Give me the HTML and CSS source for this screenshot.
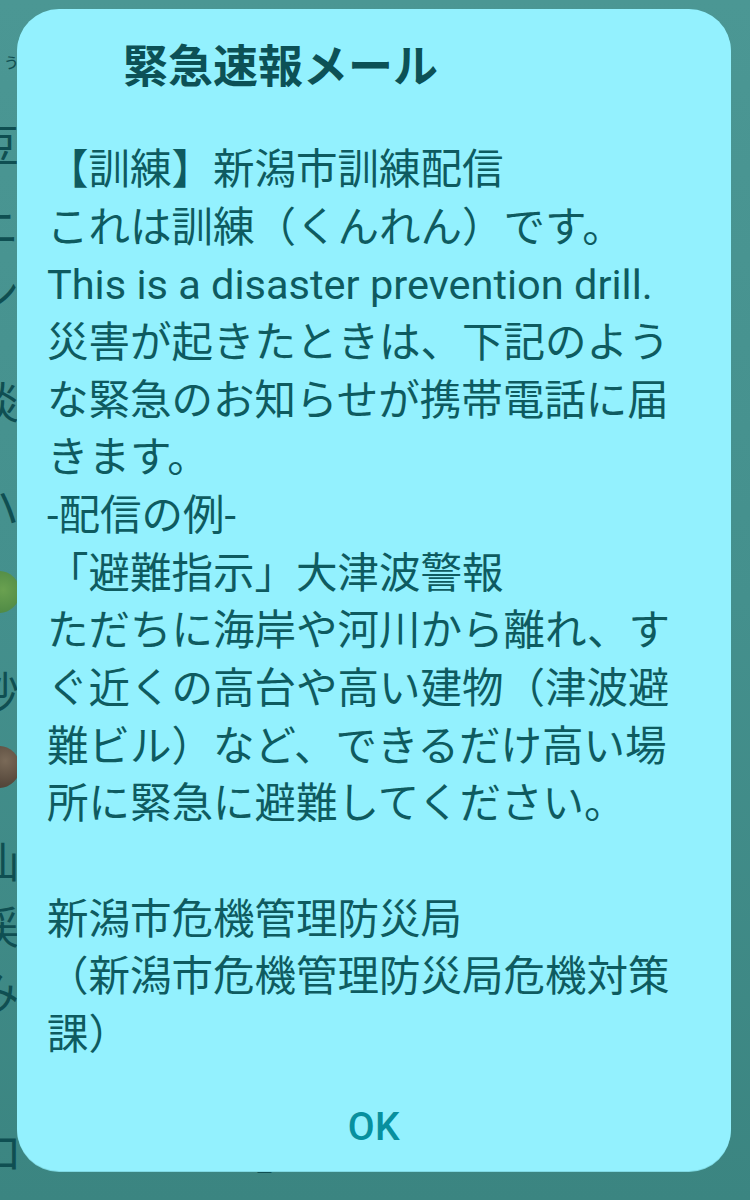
FILE: index.html
```html
<!DOCTYPE html>
<html lang="ja">
<head>
<meta charset="utf-8">
<title>緊急速報メール</title>
<link rel="stylesheet" href="styles.css">
</head>
<body>
<div class="screen">
  <div class="behind">
    <div class="brow small">ぅ</div>
    <div class="brow">豆</div>
    <div class="brow">ニ</div>
    <div class="brow">ン</div>
    <div class="brow">淡</div>
    <div class="brow">ハ</div>
    <div class="brow"><span class="emoji green"></span></div>
    <div class="brow">炒</div>
    <div class="brow"><span class="emoji brown"></span></div>
    <div class="brow">仙</div>
    <div class="brow">渓</div>
    <div class="brow">み</div>
    <div class="brow last">ローごさく、」</div>
  </div>

  <div class="dialog" role="dialog">
    <h1 class="title">緊急速報メール</h1>
    <div class="message">【訓練】新潟市訓練配信
これは訓練（くんれん）です。
This is a disaster prevention drill.
災害が起きたときは、下記のような緊急のお知らせが携帯電話に届きます。
-配信の例-
「避難指示」大津波警報
ただちに海岸や河川から離れ、すぐ近くの高台や高い建物（津波避難ビル）など、できるだけ高い場所に緊急に避難してください。

新潟市危機管理防災局
（新潟市危機管理防災局危機対策課）</div>
    <div class="actions">
      <button class="ok">OK</button>
    </div>
  </div>
</div>
</body>
</html>
```

FILE: styles.css
```css
html, body {
  margin: 0;
  padding: 0;
}

body {
  width: 750px;
  height: 1200px;
  overflow: hidden;
  font-family: Roboto, "Noto Sans CJK JP", sans-serif;
}

.screen {
  position: relative;
  width: 750px;
  height: 1200px;
  overflow: hidden;
  background: linear-gradient(to bottom, #4b9794 0%, #44908d 50%, #3b8581 100%);
}

/* underlying page, dimmed by the scrim */
.behind {
  display: flex;
  flex-direction: column;
  color: #0f4f52;
  font-family: "Noto Sans CJK JP", sans-serif;
  font-size: 44px;
}

.brow {
  height: 44px;
  line-height: 44px;
  margin-left: -25px;
  white-space: nowrap;
}

.brow.small {
  font-size: 18px;
  margin-left: 2px;
  margin-top: 38px;
}

.brow:nth-child(2) { margin-top: 39px; }
.brow:nth-child(3) { margin-top: 38px; }
.brow:nth-child(4) { margin-top: 21px; }
.brow:nth-child(5) { margin-top: 66px; }
.brow:nth-child(6) { margin-top: 61px; }
.brow:nth-child(7) { margin-top: 36px; }
.brow:nth-child(8) { margin-top: 61px; }
.brow:nth-child(9) { margin-top: 26px; }
.brow:nth-child(10) { margin-top: 56px; }
.brow:nth-child(11) { margin-top: 21px; }
.brow:nth-child(12) { margin-top: 21px; }

.brow.last {
  margin-top: 116px;
  margin-left: -22px;
  letter-spacing: 6px;
}

.emoji {
  display: inline-block;
  width: 42px;
  height: 42px;
  border-radius: 50%;
  vertical-align: middle;
  margin-left: 3px;
}

.emoji.green {
  background: radial-gradient(circle at 60% 45%, #6aa150 0%, #4f8a45 70%, #3f7a40 100%);
}

.emoji.brown {
  background: radial-gradient(circle at 65% 35%, #7a6a58 0%, #57493c 60%, #463b31 100%);
}

/* dialog */
.dialog {
  position: absolute;
  left: 17px;
  top: 9px;
  width: 714px;
  height: 1162px;
  box-sizing: border-box;
  background: #93f1fe;
  border-radius: 42px;
  display: flex;
  flex-direction: column;
  box-shadow: 0 1px 0 #7fd9e3;
}

.title {
  margin: 0;
  padding: 29px 0 0 106px;
  height: 60px;
  line-height: 60px;
  font-size: 45px;
  font-weight: 700;
  color: #0c5156;
  font-family: Roboto, "Noto Sans CJK JP", sans-serif;
}

.message {
  margin-top: 43px;
  padding: 0 30px;
  width: 652px;
  font-size: 41.5px;
  line-height: 57.67px;
  color: #0e5b60;
  white-space: pre-line;
  line-break: strict;
}

.actions {
  margin-top: auto;
  display: flex;
  justify-content: center;
}

.ok {
  height: 88px;
  padding: 0 30px;
  border: 0;
  background: transparent;
  color: #08909e;
  font-family: Roboto, "Noto Sans", sans-serif;
  font-weight: 500;
  font-size: 39px;
  letter-spacing: 0.5px;
}
```
